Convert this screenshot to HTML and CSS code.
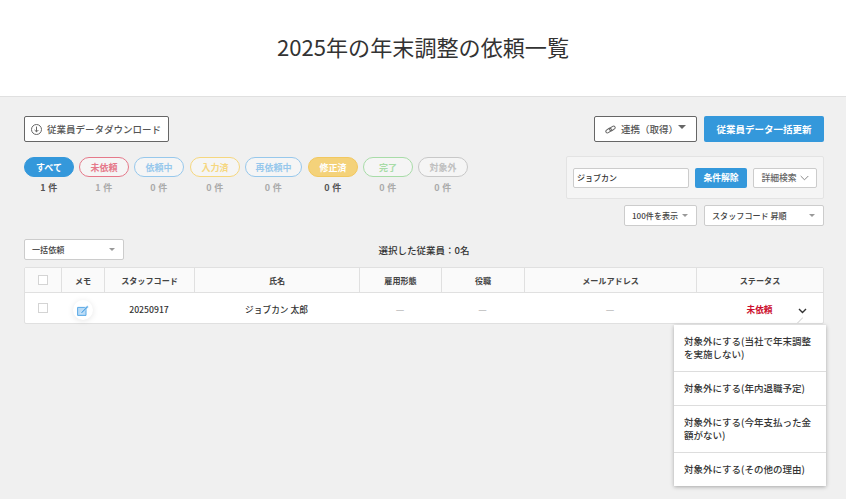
FILE: index.html
```html
<!DOCTYPE html>
<html lang="ja">
<head>
<meta charset="utf-8">
<title>2025年の年末調整の依頼一覧</title>
<link rel="stylesheet" href="styles.css">
</head>
<body>
<header class="page-header"><h1>2025年の年末調整の依頼一覧</h1></header>
<main class="content">
  <div class="toolbar">
    <button class="btn btn-outline btn-download">
      <svg width="11" height="11" viewBox="0 0 11 11" fill="none" stroke="#666" stroke-width="1"><circle cx="5.5" cy="5.5" r="5"/><path d="M5.5 2.6v5.2M3.6 6l1.9 1.9L7.4 6"/></svg>
      従業員データダウンロード
    </button>
    <div class="toolbar-right">
      <button class="btn btn-outline btn-link">
        <svg width="11" height="9" viewBox="0 0 11 9" fill="none" stroke="#666" stroke-width="1"><rect x="-3" y="-1.6" width="6" height="3.2" rx="1.6" transform="translate(3.6 5.6) rotate(-35)"/><rect x="-3" y="-1.6" width="6" height="3.2" rx="1.6" transform="translate(7.4 3.4) rotate(-35)"/></svg>
        連携（取得）<span class="caret-up"></span>
      </button>
      <button class="btn btn-primary btn-bulk">従業員データ一括更新</button>
    </div>
  </div>

  <div class="filters">
    <div class="status-list">
      <div class="status"><span class="pill pill-all">すべて</span><span class="count strong">1 件</span></div>
      <div class="status"><span class="pill pill-red">未依頼</span><span class="count">1 件</span></div>
      <div class="status"><span class="pill pill-blue">依頼中</span><span class="count">0 件</span></div>
      <div class="status"><span class="pill pill-yellow">入力済</span><span class="count">0 件</span></div>
      <div class="status wide"><span class="pill pill-blue">再依頼中</span><span class="count">0 件</span></div>
      <div class="status"><span class="pill pill-fixed">修正済</span><span class="count strong">0 件</span></div>
      <div class="status"><span class="pill pill-green">完了</span><span class="count">0 件</span></div>
      <div class="status"><span class="pill pill-gray">対象外</span><span class="count">0 件</span></div>
    </div>
    <div class="filter-side">
      <div class="search-panel">
        <input class="search-input" type="text" value="ジョブカン">
        <button class="btn-clear">条件解除</button>
        <button class="btn-detail">詳細検索<svg width="9" height="6" viewBox="0 0 9 6" fill="none" stroke="#888" stroke-width="1"><path d="M.7 1l3.8 3.8L8.3 1"/></svg></button>
      </div>
      <div class="sorters">
        <div class="select select-per">100件を表示<span class="caret"></span></div>
        <div class="select select-sort">スタッフコード 昇順<span class="caret"></span></div>
      </div>
    </div>
  </div>

  <div class="bulk-row">
    <div class="select select-bulk">一括依頼<span class="caret"></span></div>
    <div class="selected-count">選択した従業員：0名</div>
  </div>

  <div class="table-wrap">
    <div class="tr thead">
      <div class="td"><span class="check"></span></div>
      <div class="td">メモ</div>
      <div class="td">スタッフコード</div>
      <div class="td">氏名</div>
      <div class="td">雇用形態</div>
      <div class="td">役職</div>
      <div class="td">メールアドレス</div>
      <div class="td">ステータス</div>
    </div>
    <div class="tr tbody">
      <div class="td td-check"><span class="check"></span></div>
      <div class="td"><span class="memo"><svg width="12" height="11" viewBox="0 0 12 11" fill="none"><path d="M.6 2.4h8.4v8H.6z" fill="#b9dbf6" stroke="#5aa9e6" stroke-width="1"/><path d="M3.6 7.4L10.2.5l1.3 1.5-5.9 5.9-2.2.6z" fill="#5aa9e6" stroke="#fff" stroke-width=".5"/></svg></span></div>
      <div class="td">20250917</div>
      <div class="td">ジョブカン 太郎</div>
      <div class="td dash">—</div>
      <div class="td dash">—</div>
      <div class="td dash">—</div>
      <div class="td"><span class="status-red">未依頼</span>
        <svg class="chev" width="9" height="6" viewBox="0 0 9 6" fill="none" stroke="#333" stroke-width="1.4"><path d="M1 1l3.5 3.5L8 1"/></svg>
      </div>
    </div>
    <ul class="menu">
      <li>対象外にする(当社で年末調整を実施しない)</li>
      <li>対象外にする(年内退職予定)</li>
      <li>対象外にする(今年支払った金額がない)</li>
      <li>対象外にする(その他の理由)</li>
    </ul>
  </div>
</main>
</body>
</html>
```

FILE: styles.css
```css
* { box-sizing: border-box; }
html, body { margin: 0; height: 100%; }
body {
  background: #f0f0f0;
  color: #333;
  font-family: "Noto Sans CJK JP", "Noto Sans", sans-serif;
  font-size: 9px;
  overflow: hidden;
}
button { font-family: inherit; margin: 0; cursor: pointer; }

.page-header {
  height: 97px;
  padding-bottom: 4px;
  background: #fff;
  border-bottom: 1px solid #e0e0e0;
  display: flex;
  align-items: center;
  justify-content: center;
}
.page-header h1 { margin: 0; font-size: 22.1px; font-weight: 400; color: #333; line-height: 1; }

.content { padding: 19px 22px 0 24px; }

.toolbar { display: flex; justify-content: space-between; height: 26px; }
.toolbar-right { display: flex; gap: 7px; }
.btn {
  height: 26px;
  border-radius: 2px;
  font-size: 9.5px;
  font-weight: 500;
  display: inline-flex;
  align-items: center;
  justify-content: flex-start;
  padding: 0;
}
.btn-outline { background: #fff; border: 1px solid #666; color: #555; }
.btn-download { width: 145px; gap: 5px; padding-left: 6px; }
.btn-link { width: 103px; gap: 5px; padding-left: 10px; }
.btn-primary { background: #3498db; border: 0; color: #fff; }
.btn-bulk { width: 120px; font-weight: 700; justify-content: center; }
.caret-up {
  width: 0; height: 0;
  border-left: 4px solid transparent;
  border-right: 4px solid transparent;
  border-top: 4px solid #666;
  margin: 0 0 4px -5px;
}

.filters { display: flex; justify-content: space-between; margin-top: 14px; }
.status-list { display: flex; gap: 5px; padding-top: 1px; }
.status { width: 50px; display: flex; flex-direction: column; align-items: center; }
.status.wide { width: 57px; }
.status:nth-child(4) { margin-left: 1px; }
.status:nth-child(6) { margin-left: 1px; }
.pill {
  width: 100%;
  height: 20px;
  border-radius: 10px;
  border: 1px solid;
  font-size: 9px;
  font-weight: 700;
  display: flex;
  align-items: center;
  justify-content: center;
  background: #f5f5f5;
}
.pill-all { background: #3498db; border-color: #3498db; color: #fff; }
.pill-red { border-color: #e5798a; color: #e5798a; }
.pill-blue { border-color: #97c8ec; color: #97c8ec; }
.pill-yellow { border-color: #f6d77f; color: #f6d77f; }
.pill-fixed { background: #f4d27a; border-color: #f2c85f; color: #fff; }
.pill-green { border-color: #a8dca8; color: #a8dca8; }
.pill-gray { border-color: #c8c8c8; color: #c0c0c0; }
.count { margin-top: 4px; font-size: 9px; line-height: 14px; font-weight: 700; color: #aaa; letter-spacing: .3px; }
.count.strong { color: #555; }

.filter-side { width: 258px; }
.search-panel {
  height: 43px;
  background: #f5f5f5;
  border: 1px solid #e3e3e3;
  border-radius: 2px;
  padding: 0 6px;
  display: flex;
  align-items: center;
  gap: 6px;
}
.search-input {
  width: 116px;
  height: 20px;
  border: 1px solid #ccc;
  border-radius: 2px;
  background: #fff;
  padding: 0 3px;
  font: 500 8px "Noto Sans CJK JP", sans-serif;
  color: #333;
  outline: 0;
}
.btn-clear {
  width: 52px;
  height: 20px;
  background: #3498db;
  color: #fff;
  border: 0;
  border-radius: 2px;
  font-size: 8.8px;
  font-weight: 700;
  padding: 0;
}
.btn-detail {
  width: 64px;
  height: 20px;
  background: #fff;
  color: #666;
  border: 1px solid #ccc;
  border-radius: 2px;
  font-size: 8.8px;
  font-weight: 500;
  padding: 0;
  display: flex;
  align-items: center;
  justify-content: center;
  gap: 3px;
}
.sorters { display: flex; justify-content: flex-end; gap: 7px; margin-top: 6px; }
.select {
  height: 21px;
  background: #fff;
  border: 1px solid #ccc;
  border-radius: 2px;
  display: flex;
  align-items: center;
  justify-content: space-between;
  padding: 0 8px 0 7px;
  font-size: 8.1px;
  font-weight: 500;
  color: #444;
  white-space: nowrap;
}
.select-per { width: 73px; }
.select-sort { width: 120px; }
.select-bulk { width: 100px; }
.caret {
  width: 0; height: 0;
  border-left: 3px solid transparent;
  border-right: 3px solid transparent;
  border-top: 3px solid #999;
}

.bulk-row { display: flex; align-items: center; margin-top: 13px; height: 21px; }
.selected-count { flex: 1; padding-right: 100px; text-align: center; font-size: 9.5px; font-weight: 500; color: #333; }

.table-wrap {
  position: relative;
  margin-top: 7px;
  width: 800px;
  background: #fff;
  border: 1px solid #e0e0e0;
  border-radius: 2px;
}
.tr {
  display: grid;
  grid-template-columns: 36px 43px 90px 165px 82px 83px 172px 1fr;
}
.thead { height: 25px; background: #fafafa; border-bottom: 1px solid #e0e0e0; font-weight: 700; color: #444; }
.tbody { height: 30px; font-weight: 500; color: #333; }
.td { display: flex; align-items: center; justify-content: center; border-left: 1px solid #e0e0e0; font-size: 8.1px; position: relative; }
.td:first-child { border-left: 0; }
.tbody .td { border-left: 0; font-size: 8.7px; padding-top: 2px; }
.tbody .td-check { padding-top: 0; }
.check { width: 10px; height: 10px; background: #fff; border: 1px solid #d4d4d4; display: block; }
.memo {
  width: 20px; height: 20px;
  border-radius: 50%;
  background: #fff;
  box-shadow: 0 1px 6px rgba(0,0,0,.1);
  display: flex; align-items: center; justify-content: center;
  margin-top: 2px;
}
.tbody .dash { color: #aaa; font-weight: 400; font-size: 9.5px; }
.status-red { color: #cc0e2e; font-weight: 700; }
.chev { position: absolute; right: 16px; top: 15px; }

.menu {
  position: absolute;
  left: 649px;
  top: 57px;
  width: 152px;
  margin: 0;
  padding: 0;
  list-style: none;
  background: #fff;
  box-shadow: 0 1px 4px rgba(0,0,0,.3);
  z-index: 2;
}
.menu::before {
  content: "";
  position: absolute;
  left: 122px;
  top: -5px;
  width: 8px;
  height: 1px;
  background: #d8d8d8;
  transform: rotate(-45deg);
}
.menu li {
  padding: 10px;
  font-size: 9.5px;
  line-height: 13px;
  font-weight: 500;
  color: #333;
  border-top: 1px solid #ddd;
}
.menu li:first-child { border-top: 0; }
```
